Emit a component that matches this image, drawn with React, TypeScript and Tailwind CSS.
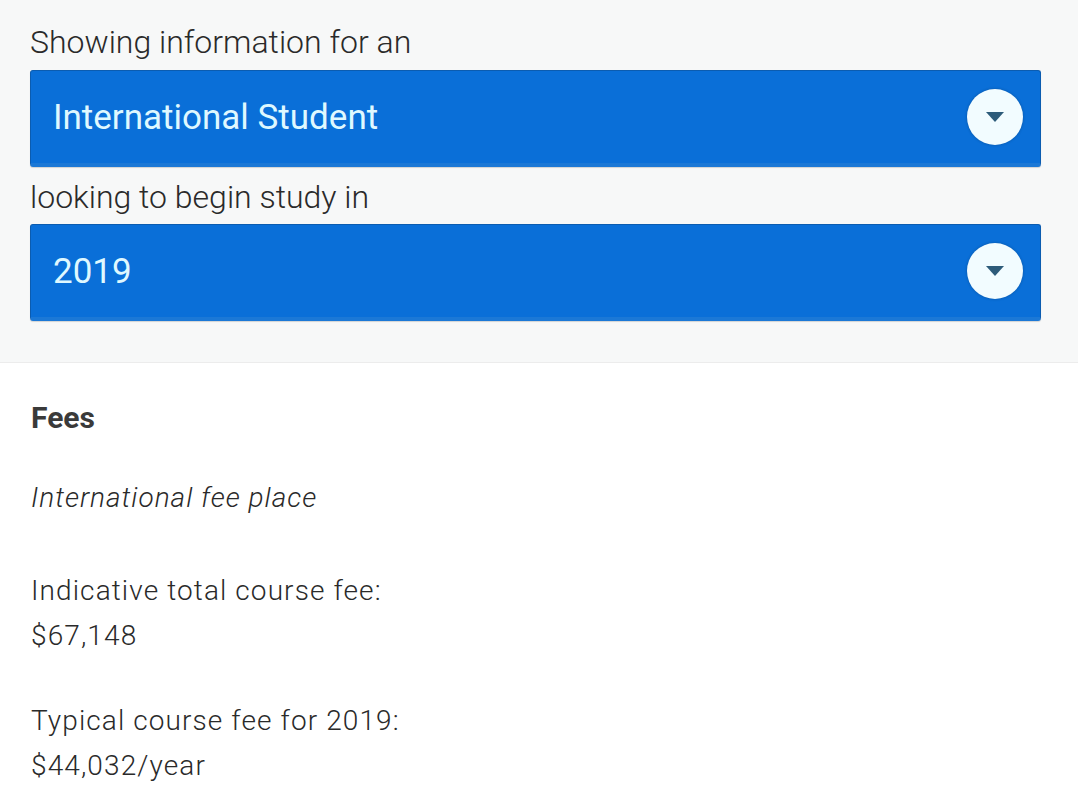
import React from "react";

function Chevron() {
  return (
    <div className="w-[56px] h-[56px] rounded-full bg-[#f2fcff] flex items-center justify-center shadow-[0_0_3px_rgba(0,0,0,0.25)]">
      <svg width="22" height="14" viewBox="0 0 22 14">
        <path d="M2 2 L20 2 L11 12 Z" fill="#2d5b7a" />
      </svg>
    </div>
  );
}

function Select({ label }: { label: string }) {
  return (
    <div className="h-[97px] rounded-[3px] bg-[#0a6fd8] border border-[#0b5cb0] border-b-[4px] border-b-[#1b78d6] flex items-center justify-between pl-[22px] pr-[17px] shadow-[0_1px_1px_rgba(0,0,0,0.15)]">
      <span className="text-[35px] text-[#dff8ff] font-normal leading-none">{label}</span>
      <Chevron />
    </div>
  );
}

export default function App() {
  return (
    <div className="w-[1078px] h-[804px] bg-white overflow-hidden" style={{ fontFamily: "Roboto, 'Noto Sans', sans-serif" }}>
      <div className="bg-[#f7f8f8] border-b border-[#ececec] pl-[30px] pr-[37px] pt-[22px] pb-[41px]">
        <div className="text-[32px] font-light text-[#2a2a2a] leading-[40px] pb-[8px]">Showing information for an</div>
        <Select label="International Student" />
        <div className="text-[32px] font-light text-[#2a2a2a] leading-[40px] pt-[10px] pb-[7px]">looking to begin study in</div>
        <Select label="2019" />
      </div>
      <div className="pl-[31px] pt-[35px] text-[#2a2a2a]">
        <div className="text-[30px] font-bold text-[#3a3a3a] leading-[40px]">Fees</div>
        <div className="text-[28px] font-light italic leading-[40px] mt-[40px] tracking-[1px]">International fee place</div>
        <div className="text-[28px] font-light leading-[45px] mt-[50px] tracking-[1.1px]">
          <div>Indicative total course fee:</div>
          <div>$67,148</div>
        </div>
        <div className="text-[28px] font-light leading-[45px] mt-[40px] tracking-[1.1px]">
          <div>Typical course fee for 2019:</div>
          <div>$44,032/year</div>
        </div>
      </div>
    </div>
  );
}
